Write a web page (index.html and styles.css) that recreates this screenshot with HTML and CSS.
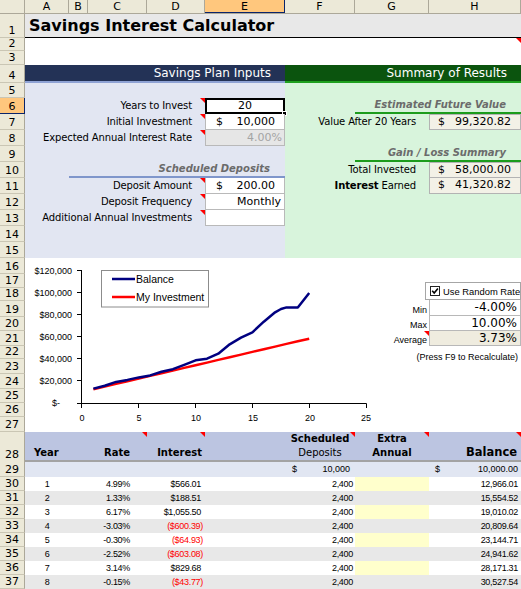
FILE: index.html
```html
<!DOCTYPE html>
<html>
<head>
<meta charset="utf-8">
<title>Savings Interest Calculator</title>
<link rel="stylesheet" href="styles.css">
</head>
<body>
<div class="sheet">
  <div class="colhead">
    <div class="corner"></div>
    <div class="ch">A</div><div class="ch">B</div><div class="ch">C</div><div class="ch">D</div>
    <div class="ch sel">E</div><div class="ch">F</div><div class="ch">G</div><div class="ch">H</div>
  </div>

  <div class="row h24">
    <div class="rh">1</div>
    <div class="title c-ah">Savings Interest Calculator</div>
  </div>
  <div class="row h13">
    <div class="rh">2</div>
    <div class="c-h cmt"></div>
  </div>
  <div class="row h14">
    <div class="rh">3</div>
  </div>
  <div class="row h18">
    <div class="rh">4</div>
    <div class="band navy c-ae">Savings Plan Inputs</div>
    <div class="band dkgreen c-fh">Summary of Results</div>
  </div>
  <div class="row h15">
    <div class="rh">5</div>
    <div class="lav c-ae"></div>
    <div class="grn c-fh"></div>
  </div>
  <div class="row h16">
    <div class="rh sel">6</div>
    <div class="lav lbl c-ad cmt">Years to Invest</div>
    <div class="inp selbox c-e ctr">20<span class="handle"></span></div>
    <div class="grn c-f"></div>
    <div class="grn head ghead c-gh">Estimated Future Value</div>
  </div>
  <div class="row h16">
    <div class="rh">7</div>
    <div class="lav lbl c-ad cmt">Initial Investment</div>
    <div class="inp money c-e"><span>$</span><span>10,000</span></div>
    <div class="grn lbl c-fg">Value After 20 Years</div>
    <div class="grn c-h"><div class="box money rb">
      <span>$</span><span>99,320.82</span></div></div>
  </div>
  <div class="row h16">
    <div class="rh">8</div>
    <div class="lav lbl c-ad cmt">Expected Annual Interest Rate</div>
    <div class="inp dis c-e">4.00%</div>
    <div class="grn c-fh"></div>
  </div>
  <div class="row h16">
    <div class="rh">9</div>
    <div class="lav c-ae"></div>
    <div class="grn c-f"></div>
    <div class="grn head ghead c-gh">Gain / Loss Summary</div>
  </div>
  <div class="row h16">
    <div class="rh">10</div>
    <div class="lav c-a"></div>
    <div class="lav head bhead c-be">Scheduled Deposits</div>
    <div class="grn lbl c-fg">Total Invested</div>
    <div class="grn c-h"><div class="box money rb">
      <span>$</span><span>58,000.00</span></div></div>
  </div>
  <div class="row h16">
    <div class="rh">11</div>
    <div class="lav lbl c-ad cmt">Deposit Amount</div>
    <div class="inp money c-e"><span>$</span><span>200.00</span></div>
    <div class="grn lbl c-fg"><b>Interest</b>&nbsp;Earned</div>
    <div class="grn c-h"><div class="box money rb notop">
      <span>$</span><span>41,320.82</span></div></div>
  </div>
  <div class="row h16">
    <div class="rh">12</div>
    <div class="lav lbl c-ad cmt">Deposit Frequency</div>
    <div class="inp rt c-e">Monthly</div>
    <div class="grn c-fh"></div>
  </div>
  <div class="row h16">
    <div class="rh">13</div>
    <div class="lav lbl c-ad cmt">Additional Annual Investments</div>
    <div class="inp c-e"></div>
    <div class="grn c-fh"></div>
  </div>
  <div class="row h16">
    <div class="rh">14</div>
    <div class="lav c-ae"></div>
    <div class="grn c-fh"></div>
  </div>
  <div class="row h16">
    <div class="rh">15</div>
    <div class="lav c-ae"></div>
    <div class="grn c-fh"></div>
  </div>

  <div class="chartzone">
    <div class="rhcol">
      <div class="rh h16">16</div>
      <div class="rh h14">17</div>
      <div class="rh h13">18</div>
      <div class="rh h16">19</div>
      <div class="rh h14">20</div>
      <div class="rh h15">21</div>
      <div class="rh h13">22</div>
      <div class="rh h15">23</div>
      <div class="rh h15">24</div>
      <div class="rh h14">25</div>
      <div class="rh h14">26</div>
      <div class="rh h15">27</div>
    </div>
    <svg class="chart" width="355" height="174" viewBox="25 258 355 174">
      <g class="axis">
        <line x1="81.5" y1="270" x2="81.5" y2="404"/>
        <line x1="81" y1="403.5" x2="366.5" y2="403.5"/>
        <line x1="77" y1="270.5" x2="81.5" y2="270.5"/>
        <line x1="77" y1="292.5" x2="81.5" y2="292.5"/>
        <line x1="77" y1="314.5" x2="81.5" y2="314.5"/>
        <line x1="77" y1="336.5" x2="81.5" y2="336.5"/>
        <line x1="77" y1="358.5" x2="81.5" y2="358.5"/>
        <line x1="77" y1="380.5" x2="81.5" y2="380.5"/>
        <line x1="77" y1="403.5" x2="81.5" y2="403.5"/>
        <line x1="81.5" y1="403.5" x2="81.5" y2="408"/>
        <line x1="138.5" y1="403.5" x2="138.5" y2="408"/>
        <line x1="195.5" y1="403.5" x2="195.5" y2="408"/>
        <line x1="252.5" y1="403.5" x2="252.5" y2="408"/>
        <line x1="309.5" y1="403.5" x2="309.5" y2="408"/>
        <line x1="366.5" y1="403.5" x2="366.5" y2="408"/>
      </g>
      <g class="ylab">
        <text x="72" y="274">$120,000</text>
        <text x="72" y="296">$100,000</text>
        <text x="72" y="318">$80,000</text>
        <text x="72" y="340">$60,000</text>
        <text x="72" y="362">$40,000</text>
        <text x="72" y="384">$20,000</text>
        <text x="60" y="406">$-</text>
      </g>
      <g class="xlab">
        <text x="82" y="421">0</text>
        <text x="139" y="421">5</text>
        <text x="196" y="421">10</text>
        <text x="253" y="421">15</text>
        <text x="310" y="421">20</text>
        <text x="366" y="421">25</text>
      </g>
      <polyline class="inv" points="93.4,389.3 104.7,386.6 116.1,383.9 127.4,381.3 138.8,378.6 150.2,375.9 161.5,373.3 172.9,370.6 184.2,367.9 195.6,365.3 207,362.6 218.3,359.9 229.7,357.3 241,354.6 252.4,351.9 263.8,349.3 275.1,346.6 286.5,343.9 297.8,341.3 309.2,338.7"/>
      <polyline class="bal" points="93.4,388.6 104.7,385.8 116.1,381.9 127.4,379.9 138.8,377.4 150.2,375.4 161.5,371.8 172.9,369.2 184.2,364.8 195.6,360.3 207,358.7 218.3,353.7 229.7,344.3 241,337.7 252.4,332.3 263.8,321.7 275.1,312.3 281,309 286.5,307.4 297.8,307.4 309.2,292.9"/>
      <rect class="legend" x="101.5" y="270.5" width="107" height="36.5"/>
      <line class="bal" x1="112" y1="279" x2="135" y2="279"/>
      <line class="inv" x1="112" y1="297" x2="135" y2="297"/>
      <text class="legt" x="136" y="283">Balance</text>
      <text class="legt" x="136" y="301">My Investment</text>
    </svg>
    <div class="rand">
      <div class="cbx">
        <svg class="tick" width="10" height="10" viewBox="0 0 10 10">
          <rect x="0.5" y="0.5" width="9" height="9"/>
          <path d="M2.2 4.8 L4.2 7 L7.9 2.5"/>
        </svg>
        <span>Use Random Rate</span>
      </div>
      <div class="rr h16"><div class="rl">Min</div><div class="rv">-4.00%</div></div>
      <div class="rr h15"><div class="rl">Max</div><div class="rv">10.00%</div></div>
      <div class="rr h15"><div class="rl cmt">Average</div><div class="rv avg">3.73%</div></div>
      <div class="note">(Press F9 to Recalculate)</div>
    </div>
  </div>

  <div class="row h29 thead">
    <div class="rh">28</div>
    <div class="th c-a yr">Year</div>
    <div class="th c-b"></div>
    <div class="th c-c rt rate cmt">Rate</div>
    <div class="th c-d rt int cmt">Interest</div>
    <div class="th c-e"></div>
    <div class="th c-f ctr cmt"><span class="two"><b>Scheduled</b><br>Deposits</span></div>
    <div class="th c-g ctr cmt"><span class="two"><b>Extra</b><br><b>Annual</b></span></div>
    <div class="th c-h rt balh cmt">Balance</div>
  </div>
  <div class="row h16 start">
    <div class="rh">29</div>
    <div class="c-f dol"><span>$</span><span>10,000</span></div>
    <div class="c-h dol bal0"><span>$</span><span>10,000.00</span></div>
  </div>

  <div class="row h14 data">
    <div class="rh">30</div>
    <div class="c-a yr">1</div><div class="c-c rate">4.99%</div><div class="c-d int">$566.01</div>
    <div class="c-f dep">2,400</div><div class="c-g extra"></div><div class="c-h balv">12,966.01</div>
  </div>
  <div class="row h14 data alt">
    <div class="rh">31</div>
    <div class="c-a yr">2</div><div class="c-c rate">1.33%</div><div class="c-d int">$188.51</div>
    <div class="c-f dep">2,400</div><div class="c-h balv">15,554.52</div>
  </div>
  <div class="row h14 data">
    <div class="rh">32</div>
    <div class="c-a yr">3</div><div class="c-c rate">6.17%</div><div class="c-d int">$1,055.50</div>
    <div class="c-f dep">2,400</div><div class="c-g extra"></div><div class="c-h balv">19,010.02</div>
  </div>
  <div class="row h14 data alt">
    <div class="rh">33</div>
    <div class="c-a yr">4</div><div class="c-c rate">-3.03%</div><div class="c-d int neg">($600.39)</div>
    <div class="c-f dep">2,400</div><div class="c-h balv">20,809.64</div>
  </div>
  <div class="row h14 data">
    <div class="rh">34</div>
    <div class="c-a yr">5</div><div class="c-c rate">-0.30%</div><div class="c-d int neg">($64.93)</div>
    <div class="c-f dep">2,400</div><div class="c-g extra"></div><div class="c-h balv">23,144.71</div>
  </div>
  <div class="row h14 data alt">
    <div class="rh">35</div>
    <div class="c-a yr">6</div><div class="c-c rate">-2.52%</div><div class="c-d int neg">($603.08)</div>
    <div class="c-f dep">2,400</div><div class="c-h balv">24,941.62</div>
  </div>
  <div class="row h14 data">
    <div class="rh">36</div>
    <div class="c-a yr">7</div><div class="c-c rate">3.14%</div><div class="c-d int">$829.68</div>
    <div class="c-f dep">2,400</div><div class="c-g extra"></div><div class="c-h balv">28,171.31</div>
  </div>
  <div class="row h14 data alt">
    <div class="rh">37</div>
    <div class="c-a yr">8</div><div class="c-c rate">-0.15%</div><div class="c-d int neg">($43.77)</div>
    <div class="c-f dep">2,400</div><div class="c-h balv">30,527.54</div>
  </div>
</div>
</body>
</html>
```

FILE: styles.css
```css
* { box-sizing: border-box; }
html, body { margin: 0; padding: 0; background: #fff; }
body { font-family: "DejaVu Sans", "Liberation Sans", sans-serif; font-size: 10px; color: #000; }

.sheet { width: 521px; height: 589px; overflow: hidden; }

.row, .colhead {
  display: grid;
  grid-template-columns: 25px 44px 19px 59px 58px 80px 70px 74px 92px;
}
.row > * { grid-row: 1; min-width: 0; }

.colhead { height: 14px; background: #ece9d8; border-bottom: 1px solid #aca899; }
.corner, .ch { border-right: 1px solid #aca899; }
.ch { font-size: 11px; line-height: 13px; text-align: center; }
.ch.sel { background: #ffc77d; border-right-color: #0a246a; box-shadow: inset 0 -1px 0 #0a246a; }

.h13 { height: 13px; } .h14 { height: 14px; } .h15 { height: 15px; } .h16 { height: 16px; }
.h18 { height: 18px; } .h24 { height: 24px; } .h29 { height: 29px; }

.rh {
  grid-column: 1;
  background: #ece9d8;
  border-right: 1px solid #aca899;
  border-bottom: 1px solid #cac6b4;
  font-size: 11px;
  line-height: 13px;
  display: flex;
  align-items: flex-end;
  justify-content: center;
  overflow: hidden;
}
.rh.sel { background: #ffc77d; border-right-color: #0a246a; border-bottom-color: #0a246a; }

.c-a { grid-column: 2; } .c-b { grid-column: 3; } .c-c { grid-column: 4; } .c-d { grid-column: 5; }
.c-e { grid-column: 6; } .c-f { grid-column: 7; } .c-g { grid-column: 8; } .c-h { grid-column: 9; }
.c-ad { grid-column: 2 / 6; } .c-ae { grid-column: 2 / 7; } .c-be { grid-column: 3 / 7; }
.c-fh { grid-column: 7 / 10; } .c-gh { grid-column: 8 / 10; } .c-fg { grid-column: 7 / 9; }
.c-ah { grid-column: 2 / 10; }

.cmt { position: relative; }
.cmt::after {
  content: "";
  position: absolute;
  top: 0; right: 0;
  border-top: 5px solid #ff0000;
  border-left: 5px solid transparent;
}

.title {
  background: #e8e8e8;
  border-bottom: 1px solid #000;
  font-weight: bold;
  font-size: 16px;
  line-height: 19px;
  padding: 0 0 2px 4px;
  display: flex;
  align-items: flex-end;
  white-space: nowrap;
}

.band {
  color: #fff;
  font-size: 12px;
  line-height: 16px;
  text-align: right;
  padding-right: 14px;
  white-space: nowrap;
}
.navy { background: #233256; border-bottom: 2px solid #8ea2d4; }
.dkgreen { background: #0b540e; border-bottom: 2px solid #1fa01f; }

.lav { background: #e2e6f2; }
.grn { background: #d8f4dc; }

.lbl {
  text-align: right;
  padding-right: 13px;
  line-height: 16px;
  letter-spacing: -0.12px;
  white-space: nowrap;
}
.lbl b { font-weight: bold; }

.head {
  font-weight: bold;
  font-style: italic;
  color: #6b6b6b;
  text-align: right;
  padding-right: 15px;
  line-height: 14px;
  white-space: nowrap;
}
.ghead { border-bottom: 2px solid #1c9c1c; }
.bhead { border-bottom: 2px solid #7f96cb; }

.inp {
  background: #fff;
  border: 1px solid #b9b9b9;
  border-top: none;
  font-size: 11px;
  line-height: 15px;
  white-space: nowrap;
  position: relative;
}
.inp.ctr { text-align: center; }
.inp.rt { text-align: right; padding-right: 3px; }
.inp.dis { background: #e6e6e6; color: #a4a4a4; text-align: right; padding-right: 2px; }
.selbox { border: 2px solid #000; line-height: 12px; }
.handle {
  position: absolute;
  right: -4px; bottom: -4px;
  width: 5px; height: 5px;
  background: #000;
  border: 1px solid #fff;
}

.money {
  display: flex;
  justify-content: space-between;
  padding: 0 9px 0 10px;
}

.box {
  height: 100%;
  background: #f3f1e7;
  border: 1px solid #b3b3b3;
  font-size: 11px;
  line-height: 14px;
  white-space: nowrap;
}
.box.rb { padding: 0 9px 0 8px; }
.box.notop { border-top: none; }

/* chart zone */
.chartzone {
  display: grid;
  grid-template-columns: 25px 355px 141px;
  height: 174px;
}
.rhcol { display: flex; flex-direction: column; }
.chart { display: block; }
.axis line { stroke: #000; stroke-width: 1; }
.ylab text { font-family: "Liberation Sans", sans-serif; font-size: 9px; text-anchor: end; }
.xlab text { font-family: "Liberation Sans", sans-serif; font-size: 9px; text-anchor: middle; }
.bal { fill: none; stroke: #000080; stroke-width: 2.5; stroke-linejoin: round; }
.inv { fill: none; stroke: #ff0000; stroke-width: 2.5; stroke-linejoin: round; }
.legend { fill: #fff; stroke: #8c8c8c; stroke-width: 1; }
.legt { font-family: "Liberation Sans", sans-serif; font-size: 10.5px; }

.rand { padding-top: 24px; }
.cbx {
  margin-left: 45px;
  height: 18px;
  border: 1px solid #a6a6a6;
  display: flex;
  align-items: center;
  padding-left: 4px;
  gap: 3px;
  font-family: "Liberation Sans", sans-serif;
  font-size: 9.4px;
  white-space: nowrap;
  overflow: hidden;
}
.tick { display: block; flex: none; width: 10px; height: 10px; }
.tick rect { fill: #fff; stroke: #222; stroke-width: 1; }
.tick path { fill: none; stroke: #000; stroke-width: 1.6; }
.rr { display: grid; grid-template-columns: 49px 92px; }
.rl {
  font-family: "Liberation Sans", sans-serif;
  font-size: 9px;
  text-align: right;
  padding-right: 2px;
  display: flex;
  align-items: flex-end;
  justify-content: flex-end;
  line-height: 11px;
}
.rv {
  border: 1px solid #b8b8b8;
  border-top: none;
  font-size: 12px;
  line-height: 14px;
  text-align: right;
  padding-right: 3px;
}
.rv.avg { background: #efecdf; }
.note {
  height: 17px;
  display: flex;
  align-items: flex-end;
  justify-content: flex-end;
  padding-right: 3px;
  font-family: "Liberation Sans", sans-serif;
  font-size: 9px;
  line-height: 12px;
  white-space: nowrap;
}

/* table */
.th {
  background: #bcc5e1;
  border-bottom: 2px solid #a3a3a3;
  font-weight: bold;
  font-size: 10px;
  line-height: 14px;
  display: flex;
  align-items: flex-end;
  white-space: nowrap;
}
.th.rt { justify-content: flex-end; }
.th.ctr { justify-content: center; text-align: center; }
.th.yr { padding-left: 9px; }
.th.rate { padding-right: 17px; }
.th.int { padding-right: 3px; }
.th .two b { font-weight: bold; }
.th .two { font-weight: normal; }
.th.balh { font-size: 11.5px; padding-right: 4px; line-height: 15px; }

.start { background: #e1e6f2; }
.start .rh { background: #ece9d8; }
.dol {
  display: flex;
  justify-content: space-between;
  align-items: center;
  font-family: "Liberation Sans", sans-serif;
  font-size: 9px;
  padding: 0 5px 0 7px;
}
.dol.bal0 { padding: 0 3px 0 6px; }

.data {
  font-family: "Liberation Sans", sans-serif;
  font-size: 9px;
  line-height: 14px;
  letter-spacing: -0.3px;
}
.data.alt { background: #e8e8e8; }
.data .rh { font-family: "DejaVu Sans", sans-serif; letter-spacing: 0; }
.data .yr { text-align: center; }
.data .rate { text-align: right; padding-right: 17px; }
.data .int { text-align: right; padding-right: 4px; }
.data .int.neg { color: #ff0000; padding-right: 2px; }
.data .dep { text-align: right; padding-right: 2px; }
.data .balv { text-align: right; padding-right: 3px; }
.extra { background: #ffffcc; }
```
